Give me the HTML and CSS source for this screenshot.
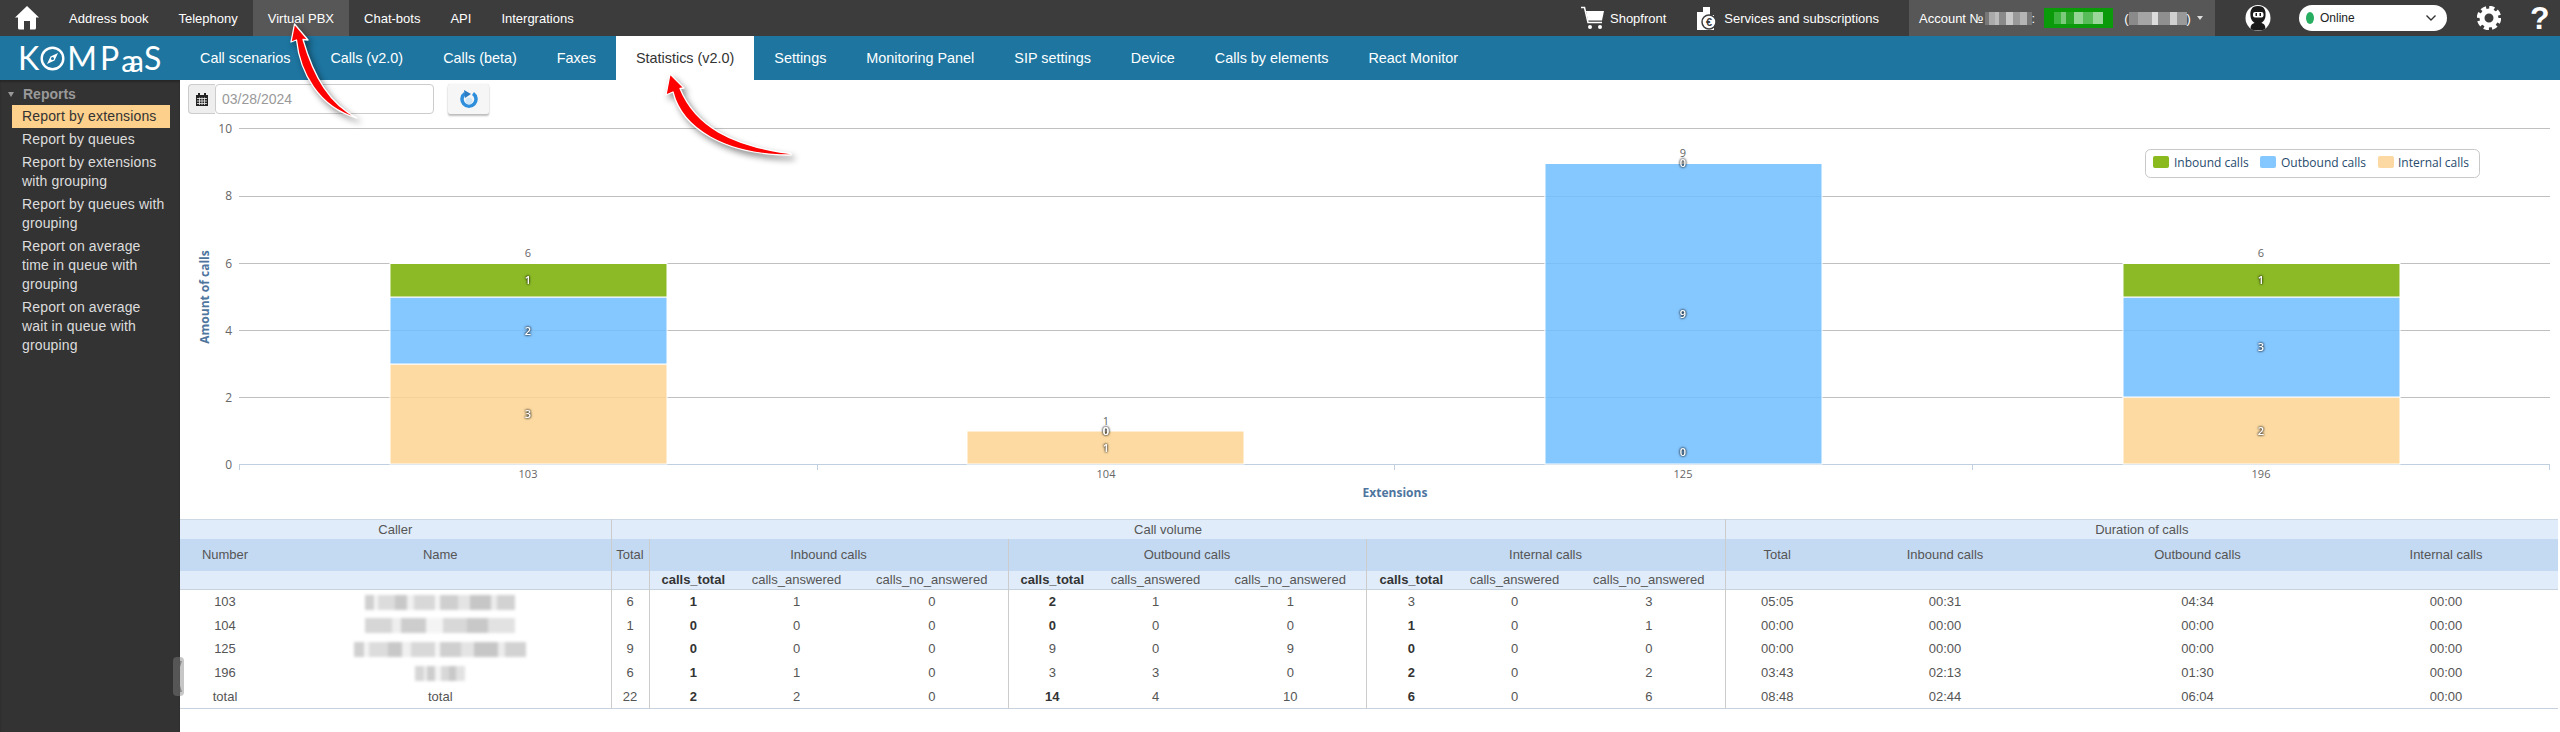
FILE: index.html
```html
<!DOCTYPE html>
<html lang="en">
<head>
<meta charset="utf-8">
<title>Reports</title>
<link rel="stylesheet" href="styles.css">
</head>
<body>
<div class="app">
  <header class="topbar">
    <a class="home"><svg width="24" height="24" viewBox="0 0 24 24"><path class="fill-white" d="M12 0 L24 11.5 L21 11.5 L21 22 Q21 23.5 19.5 23.5 L15 23.5 L15 15 L9 15 L9 23.5 L4.500 23.500 Q3 23.500 3 22 L3 11.500 L0 11.500 Z"/></svg></a>
    <a class="top-item">Address book</a>
    <a class="top-item">Telephony</a>
    <a class="top-item active">Virtual PBX</a>
    <a class="top-item">Chat-bots</a>
    <a class="top-item">API</a>
    <a class="top-item">Intergrations</a>
    <div class="top-right">
      <a class="tool shop"><svg width="23" height="24" viewBox="0 0 23 24"><path class="cart-line" d="M0 1.500 H3.500 L7 16.500 H21"/><path class="fill-white" d="M5 5 H23 L21 14.500 H7 Z"/><circle class="fill-white" cx="9" cy="21" r="2"/><circle class="fill-white" cx="19" cy="21" r="2"/></svg><span>Shopfront</span></a>
      <a class="tool services"><svg width="23" height="24" viewBox="0 0 23 24"><path class="fill-white" d="M2 6 L8 6 L8 1 L15 1 L15 9 L19 9 L19 24 L2 24 Z"/><circle class="dark-disc" cx="14" cy="16" r="7"/><text class="euro" x="14" y="20">€</text></svg><span>Services and subscriptions</span></a>
      <div class="account">
        <span>Account №</span><i class="mosaic m-num"></i><span>:</span>
        <i class="badge"><i class="mosaic-green"></i></i>
        <span class="paren">(</span><i class="mosaic m-name"></i><span>)</span>
        <i class="caret-down"></i>
      </div>
      <svg class="avatar" width="26" height="26" viewBox="0 0 26 26"><ellipse class="fill-white" cx="13" cy="13" rx="12.500" ry="13"/><path class="fill-black" d="M13 1 C20 1 21 6 20.500 11 C20 16 17 17 16.500 18 C20 19 21 22 20 24 C17 26 9 26 6 24 C5 22 6 19 9.500 18 C9 17 6 16 5.500 11 C5 6 6 1 13 1 Z"/><rect class="fill-white" x="8" y="7" width="10.500" height="5.500" rx="2"/><rect class="fill-black" x="10.500" y="8" width="1.500" height="3"/><rect class="fill-black" x="14.500" y="8" width="1.500" height="3"/></svg>
      <div class="status"><i class="dot"></i><span>Online</span><svg class="chev" width="10" height="6" viewBox="0 0 10 6"><path d="M0.500 0.500 L5 5 L9.500 0.500"/></svg></div>
      <svg class="gear" width="24" height="24" viewBox="0 0 24 24"><circle class="gear-teeth" cx="12" cy="12" r="10.200"/><circle class="gear-ring" cx="12" cy="12" r="7"/></svg>
      <span class="help">?</span>
    </div>
  </header>

  <nav class="navbar">
    <div class="logo"><span>K</span><svg class="compass" width="25" height="25" viewBox="0 0 25 25"><circle class="compass-ring" cx="12.500" cy="12.500" r="10.800"/><path class="fill-white" d="M18 7 L14.500 14.500 L7 18 L10.500 10.500 Z"/><circle class="compass-hub" cx="12.500" cy="12.500" r="1.500"/></svg><span class="logo-m">M</span><span>P</span><span class="aa">aa</span><span>S</span></div>
    <a class="nav-item">Call scenarios</a>
    <a class="nav-item">Calls (v2.0)</a>
    <a class="nav-item">Calls (beta)</a>
    <a class="nav-item">Faxes</a>
    <a class="nav-item active">Statistics (v2.0)</a>
    <a class="nav-item">Settings</a>
    <a class="nav-item">Monitoring Panel</a>
    <a class="nav-item">SIP settings</a>
    <a class="nav-item">Device</a>
    <a class="nav-item">Calls by elements</a>
    <a class="nav-item">React Monitor</a>
  </nav>

  <div class="content">
    <aside class="sidebar">
      <div class="side-title"><i class="side-caret"></i>Reports</div>
      <ul class="side-list">
        <li class="selected">Report by extensions</li>
        <li>Report by queues</li>
        <li>Report by extensions with grouping</li>
        <li>Report by queues with grouping</li>
        <li>Report on average time in queue with grouping</li>
        <li>Report on average wait in queue with grouping</li>
      </ul>
    </aside>

    <main class="main">
      <div class="toolbar">
        <div class="date-group">
          <span class="addon"><svg width="12" height="13" viewBox="0 0 12 13"><path class="fill-dark" d="M2 0 H4 V2 H8 V0 H10 V2 H12 V13 H0 V2 H2 Z"/><path class="cal-grid" d="M1 5.500 H11 M1 8 H11 M1 10.500 H11 M3.500 4.500 V12 M6 4.500 V12 M8.500 4.500 V12"/></svg></span>
          <span class="date-input">03/28/2024</span>
        </div>
        <button class="refresh"><svg width="18" height="20" viewBox="0 0 18 20"><path class="refresh-ring" d="M5 4.500 A7 7 0 1 0 13 4.500"/><path class="refresh-dark" d="M4 1 L11 5 L5 9 Z"/><circle class="refresh-core" cx="9" cy="12" r="3.500"/></svg></button>
      </div>

      <svg class="chart" viewBox="180 120 2380 399" width="2380" height="399">
        <g class="grid">
          <path d="M239 128.500 H2550 M239 196.500 H2550 M239 263.500 H2550 M239 330.500 H2550 M239 397.500 H2550"/>
        </g>
        <path class="axis" d="M239 464.500 H2550 M239.500 464 V470 M817.500 464 V470 M1394.500 464 V470 M1972.500 464 V470 M2549.500 464 V470"/>
        <g class="ylabels">
          <text x="232" y="133">10</text><text x="232" y="200">8</text><text x="232" y="268">6</text><text x="232" y="335">4</text><text x="232" y="402">2</text><text x="232" y="469">0</text>
        </g>
        <text class="axis-title" transform="translate(209 297) rotate(-90)">Amount of calls</text>
        <text class="axis-title" x="1395" y="497">Extensions</text>

        <rect class="bar internal" x="390" y="364" width="277" height="100"/>
        <rect class="bar outbound" x="390" y="297" width="277" height="67"/>
        <rect class="bar inbound" x="390" y="263.500" width="277" height="33.500"/>
        <rect class="bar internal" x="967" y="431" width="277" height="33"/>
        <rect class="bar outbound" x="1545" y="163.500" width="277" height="300.500"/>
        <rect class="bar internal" x="2123" y="397" width="277" height="67"/>
        <rect class="bar outbound" x="2123" y="297" width="277" height="100"/>
        <rect class="bar inbound" x="2123" y="263.500" width="277" height="33.500"/>

        <g class="ticks">
          <text x="528" y="478">103</text><text x="1106" y="478">104</text><text x="1683" y="478">125</text><text x="2261" y="478">196</text>
        </g>
        <g class="totals">
          <text x="528" y="257">6</text><text x="1106" y="425">1</text><text x="1683" y="157">9</text><text x="2261" y="257">6</text>
        </g>
        <g class="labels">
          <text x="528" y="284">1</text><text x="528" y="335">2</text><text x="528" y="418">3</text>
          <text x="1106" y="435">0</text><text x="1106" y="435">0</text><text x="1106" y="452">1</text>
          <text x="1683" y="167">0</text><text x="1683" y="318">9</text><text x="1683" y="456">0</text>
          <text x="2261" y="284">1</text><text x="2261" y="351">3</text><text x="2261" y="435">2</text>
        </g>

        <rect class="legend-box" x="2145.500" y="149.500" width="334" height="28" rx="5"/>
        <rect class="sw-in" x="2153" y="156" width="16" height="12" rx="2"/><text class="legend" x="2174" y="167">Inbound calls</text>
        <rect class="sw-out" x="2260" y="156" width="16" height="12" rx="2"/><text class="legend" x="2281" y="167">Outbound calls</text>
        <rect class="sw-int" x="2378" y="156" width="16" height="12" rx="2"/><text class="legend" x="2398" y="167">Internal calls</text>
      </svg>

      <table class="stats">
        <colgroup>
          <col class="w90"><col class="w341"><col class="w38"><col class="w88"><col class="w119"><col class="w152"><col class="w88"><col class="w119"><col class="w151"><col class="w90"><col class="w117"><col class="w152"><col class="w104"><col class="w232"><col class="w273"><col class="w224">
        </colgroup>
        <thead>
          <tr class="h1"><th colspan="2">Caller</th><th colspan="10" class="bl">Call volume</th><th colspan="4" class="bl">Duration of calls</th></tr>
          <tr class="h2"><th>Number</th><th>Name</th><th class="bl">Total</th><th colspan="3" class="bl">Inbound calls</th><th colspan="3" class="bl">Outbound calls</th><th colspan="3" class="bl">Internal calls</th><th class="bl">Total</th><th>Inbound calls</th><th>Outbound calls</th><th>Internal calls</th></tr>
          <tr class="h3"><th></th><th></th><th class="bl"></th><th class="bl strong">calls_total</th><th>calls_answered</th><th>calls_no_answered</th><th class="bl strong">calls_total</th><th>calls_answered</th><th>calls_no_answered</th><th class="bl strong">calls_total</th><th>calls_answered</th><th>calls_no_answered</th><th class="bl"></th><th></th><th></th><th></th></tr>
        </thead>
        <tbody>
          <tr><td>103</td><td><i class="redact w-a"></i></td><td class="bl">6</td><td class="bl strong">1</td><td>1</td><td>0</td><td class="bl strong">2</td><td>1</td><td>1</td><td class="bl">3</td><td>0</td><td>3</td><td class="bl">05:05</td><td>00:31</td><td>04:34</td><td>00:00</td></tr>
          <tr><td>104</td><td><i class="redact w-a alt"></i></td><td class="bl">1</td><td class="bl strong">0</td><td>0</td><td>0</td><td class="bl strong">0</td><td>0</td><td>0</td><td class="bl strong">1</td><td>0</td><td>1</td><td class="bl">00:00</td><td>00:00</td><td>00:00</td><td>00:00</td></tr>
          <tr><td>125</td><td><i class="redact w-b"></i></td><td class="bl">9</td><td class="bl strong">0</td><td>0</td><td>0</td><td class="bl">9</td><td>0</td><td>9</td><td class="bl strong">0</td><td>0</td><td>0</td><td class="bl">00:00</td><td>00:00</td><td>00:00</td><td>00:00</td></tr>
          <tr><td>196</td><td><i class="redact w-c alt"></i></td><td class="bl">6</td><td class="bl strong">1</td><td>1</td><td>0</td><td class="bl">3</td><td>3</td><td>0</td><td class="bl strong">2</td><td>0</td><td>2</td><td class="bl">03:43</td><td>02:13</td><td>01:30</td><td>00:00</td></tr>
          <tr><td>total</td><td>total</td><td class="bl">22</td><td class="bl strong">2</td><td>2</td><td>0</td><td class="bl strong">14</td><td>4</td><td>10</td><td class="bl strong">6</td><td>0</td><td>6</td><td class="bl">08:48</td><td>02:44</td><td>06:04</td><td>00:00</td></tr>
        </tbody>
      </table>
    </main>
  </div>

  <div class="collapse-handle"><svg width="11" height="39" viewBox="0 0 11 39"><path d="M8 4 L3 19 L8 35"/></svg></div>

  <svg class="arrows" width="2560" height="732" viewBox="0 0 2560 732">
    <path class="arrow" d="M294.500 24 L308 40 L303 39.500 C314 78 330 104 357 118 C318 107 300 72 296.500 40 L291 42 Z"/>
    <path class="arrow" d="M670 74 L684 88 L680 88.500 C695 125 730 146 791 153.500 L791 155 C724 155 682 128 673 92 L666 95 Z"/>
  </svg>
</div>
</body>
</html>
```

FILE: styles.css
```css
* { box-sizing: border-box; }
html, body { margin: 0; padding: 0; background: #fff; }
body { font-family: "Liberation Sans", Arial, sans-serif; overflow: hidden; }
i { font-style: normal; display: inline-block; }
a { color: inherit; text-decoration: none; }

.app { position: relative; width: 2560px; height: 732px; overflow: hidden; display: flex; flex-direction: column; }

.fill-white { fill: #fff; }
.fill-black { fill: #1a1a1a; }
.fill-dark { fill: #222; }

/* top bar */
.topbar { height: 36px; flex: none; background: #3c3c3c; color: #fff; display: flex; align-items: stretch; font-size: 13px; }
.home { width: 54px; padding-left: 15px; display: flex; align-items: center; }
.top-item { display: flex; align-items: center; padding: 0 15px; }
.top-item.active { background: #575757; }
.top-right { margin-left: auto; display: flex; align-items: center; height: 36px; }
.tool { display: flex; align-items: center; gap: 6px; }
.shop { margin-right: 29px; }
.services { margin-right: 30px; }
.cart-line { fill: none; stroke: #fff; stroke-width: 1.5; }
.dark-disc { fill: #fff; stroke: #3c3c3c; stroke-width: 1.5; }
.euro { fill: #3c3c3c; font-size: 11px; font-weight: bold; text-anchor: middle; font-family: "Liberation Sans", sans-serif; }
.account { width: 306px; height: 36px; background: #575757; padding-left: 10px; display: flex; align-items: center; margin-right: 30px; }
.mosaic { height: 13px; background: linear-gradient(90deg, #777 0 8%, #aaa 8% 22%, #bbb 22% 30%, #8a8a8a 30% 45%, #c8c8c8 45% 60%, #999 60% 75%, #b5b5b5 75% 90%, #777 90%); }
.m-num { width: 47px; margin-left: 1px; }
.m-name { width: 58px; background: linear-gradient(90deg, #8a8a8a 0 15%, #a5a5a5 15% 40%, #dcdcdc 40% 50%, #8f8f8f 50% 70%, #d0d0d0 70% 82%, #999 82%); }
.badge { width: 69px; height: 20px; background: #0a9a0a; margin-left: 9px; padding: 4px 10px; }
.mosaic-green { display: block; width: 100%; height: 12px; background: linear-gradient(90deg, #3fb33f 0 15%, #7ccb7c 15% 25%, #2aa52a 25% 40%, #94d494 40% 60%, #58bc58 60% 80%, #9bd69b 80%); }
.paren { margin-left: 11px; }
.caret-down { width: 0; height: 0; margin-left: 6px; border-left: 3.5px solid transparent; border-right: 3.5px solid transparent; border-top: 4px solid #ddd; }
.avatar { margin-right: 28px; }
.status { width: 148px; height: 26px; border-radius: 13px; background: #fff; color: #222; font-size: 12px; display: flex; align-items: center; padding-left: 7px; margin-right: 30px; }
.dot { width: 8px; height: 12px; border-radius: 50%; background: #27ae60; margin-right: 6px; }
.chev { margin-left: auto; margin-right: 11px; fill: none; stroke: #333; stroke-width: 1.4; }
.gear { margin-right: 29px; }
.gear-ring { fill: none; stroke: #fff; stroke-width: 5; }
.gear-teeth { fill: none; stroke: #fff; stroke-width: 4; stroke-dasharray: 5 3; }
.help { font-size: 32px; font-weight: bold; width: 30px; line-height: 36px; }

/* blue navigation */
.navbar { height: 44px; flex: none; background: #1d75a0; color: #fff; display: flex; align-items: stretch; font-size: 14.4px; }
.logo { width: 180px; padding-left: 18px; display: flex; align-items: center; font-family: Lato, sans-serif; font-weight: 400; font-size: 32px; line-height: 44px; }
.compass { margin: 0 2px 0 1px; flex: none; }
.compass-ring { fill: none; stroke: #fff; stroke-width: 2.4; }
.compass-hub { fill: #1d75a0; }
.logo-m { margin-right: 3px; }
.aa { letter-spacing: -7px; margin: 0 7px 0 2px; font-size: 30px; padding-top: 3px; }
.nav-item { display: flex; align-items: center; padding: 0 20px; }
.nav-item.active { background: #fff; color: #333; }

/* layout below */
.content { flex: 1; display: flex; min-height: 0; }
.sidebar { width: 180px; flex: none; background: #333; font-size: 14px; color: #ddd; padding-top: 3px; box-shadow: inset 0 2px 2px rgba(0,0,0,.25); }
.side-title { height: 22px; line-height: 20px; padding-left: 8px; color: #999; font-weight: bold; display: flex; align-items: center; }
.side-caret { width: 0; height: 0; margin-right: 9px; border-left: 3px solid transparent; border-right: 3px solid transparent; border-top: 5px solid #999; }
.side-list { list-style: none; margin: 0; padding: 0 0 0 12px; width: 170px; }
.side-list li { padding: 2px 4px 2px 10px; line-height: 19px; letter-spacing: .15px; }
.side-list li.selected { background: #fdd08b; color: #333; }

.main { flex: 1; min-width: 0; }
.toolbar { height: 40px; padding: 4px 0 0 8px; display: flex; align-items: flex-start; gap: 14px; }
.date-group { display: flex; width: 246px; height: 30px; }
.addon { width: 27px; background: #eee; border: 1px solid #ccc; border-right: 0; border-radius: 4px 0 0 4px; display: flex; align-items: center; justify-content: center; }
.cal-grid { stroke: #eee; stroke-width: .8; fill: none; }
.date-input { flex: 1; border: 1px solid #ccc; border-radius: 4px; padding-left: 6px; color: #999; font-size: 14px; line-height: 28px; }
.refresh { width: 41px; height: 30px; padding: 0; background: #f6f6f6; border: 0; border-radius: 2px; box-shadow: 0 2px 2px rgba(0,0,0,.25), 0 0 1px rgba(0,0,0,.2); display: flex; align-items: center; justify-content: center; }
.refresh-ring { fill: none; stroke: #2f8fdc; stroke-width: 3.5; }
.refresh-dark { fill: #2b7cc4; }
.refresh-core { fill: #cfe6f9; }

.chart { display: block; font-family: "Open Sans", sans-serif; }
.grid path { fill: none; stroke: #c0c0c0; stroke-width: 1; }
.axis { fill: none; stroke: #c0d0e0; stroke-width: 1; }
.ylabels text { font-size: 12px; fill: #666; text-anchor: end; }
.ticks text { font-size: 11px; fill: #666; text-anchor: middle; }
.axis-title { font-size: 12px; font-weight: bold; fill: #4d759e; text-anchor: middle; }
.bar { stroke: #fff; stroke-width: 1; }
.inbound { fill: rgba(119, 174, 0, .85); }
.outbound { fill: rgba(112, 189, 255, .85); }
.internal { fill: rgba(252, 211, 146, .85); }
.totals text { font-size: 11px; fill: #666; text-anchor: middle; }
.labels { filter: drop-shadow(0 0 1px rgba(0,0,0,.8)) drop-shadow(0 0 1px rgba(0,0,0,.5)); }
.labels text { font-size: 11px; font-weight: 600; fill: #fff; text-anchor: middle; }
.legend-box { fill: #fff; stroke: #c8c8c8; }
.legend { font-size: 12px; fill: #274b6d; }
.sw-in { fill: #8bba1f; }
.sw-out { fill: #85c7ff; }
.sw-int { fill: #fcd9a2; }

/* table */
.stats { table-layout: fixed; width: 2378px; border-collapse: collapse; font-size: 13px; color: #555; text-align: center; border-top: 1px solid #ccd8e4; border-bottom: 1px solid #c8d2dc; }
.stats th { font-weight: normal; padding: 0; }
.stats td { padding: 0; height: 23.8px; }
.stats tbody { border-top: 1px solid #c8d2dc; }
.stats .strong { font-weight: bold; color: #333; }
.stats .bl { border-left: 1px solid #ccc; }
.h1 { height: 19px; background: #e0ecfa; }
.h2 { height: 32px; background: #c4daf3; }
.h3 { height: 19px; background: #e0ecfa; }
.w90 { width: 90px; } .w341 { width: 341px; } .w38 { width: 38px; } .w88 { width: 88px; }
.w119 { width: 119px; } .w152 { width: 152px; } .w151 { width: 151px; } .w117 { width: 117px; }
.w104 { width: 104px; } .w232 { width: 232px; } .w273 { width: 273px; } .w224 { width: 224px; }
.redact { height: 15px; vertical-align: middle; filter: blur(1.6px); background: linear-gradient(90deg, #d0d0d0 0 6%, #f4f4f4 6% 9%, #dcdcdc 9% 20%, #c8c8c8 20% 28%, #f0f0f0 28% 33%, #d8d8d8 33% 47%, #f6f6f6 47% 50%, #cfcfcf 50% 62%, #e4e4e4 62% 70%, #c6c6c6 70% 84%, #ececec 84% 88%, #d2d2d2 88%); }
.redact.alt { background: linear-gradient(90deg, #d6d6d6 0 18%, #eee 18% 24%, #cdcdcd 24% 41%, #f4f4f4 41% 52%, #d8d8d8 52% 68%, #c8c8c8 68% 82%, #e2e2e2 82%); }
.w-a { width: 150px; }
.w-b { width: 172px; }
.w-c { width: 50px; }

/* overlays */
.collapse-handle { position: absolute; left: 173px; top: 657px; width: 11px; height: 39px; border-radius: 4px; background: rgba(128,128,128,.45); }
.collapse-handle path { fill: none; stroke: rgba(90,90,90,.55); stroke-width: 2; }
.collapse-handle svg { display: block; }
.arrows { position: absolute; left: 0; top: 0; pointer-events: none; filter: drop-shadow(3px 4px 3px rgba(0,0,0,.45)); }
.arrow { fill: #f00; stroke: #fff; stroke-width: 1.3; stroke-linejoin: round; }
```
